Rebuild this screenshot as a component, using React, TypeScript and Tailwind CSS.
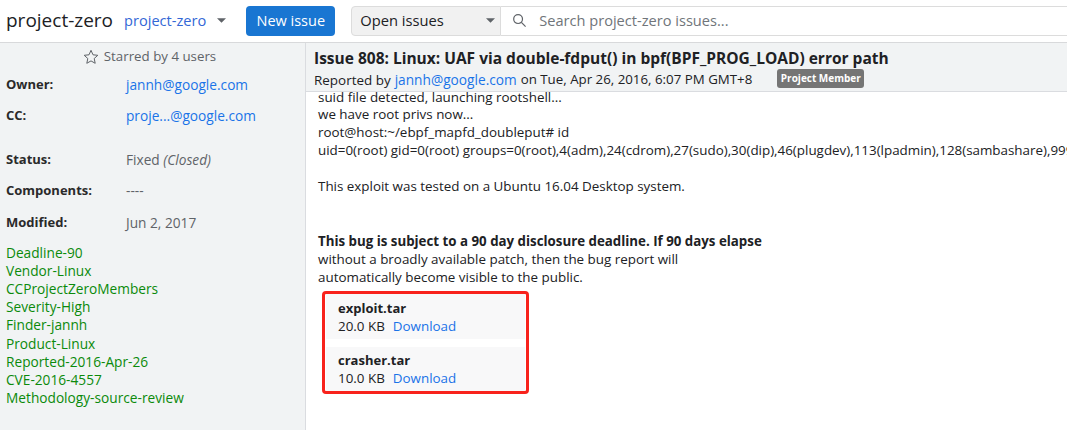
const labels = [
  'Deadline-90',
  'Vendor-Linux',
  'CCProjectZeroMembers',
  'Severity-High',
  'Finder-jannh',
  'Product-Linux',
  'Reported-2016-Apr-26',
  'CVE-2016-4557',
  'Methodology-source-review',
];

const Caret = ({ className }: { className: string }) => (
  <svg width="9" height="5" viewBox="0 0 10 5" className={className}>
    <path d="M0 0h10L5 5z" />
  </svg>
);

const MetaRow = ({ label, children, className }: { label: string; children: React.ReactNode; className: string }) => (
  <div className={`flex h-[18px] items-center ${className}`}>
    <div className="w-[120px] text-[13px] font-bold text-[#2a2a2a]">{label}</div>
    <div>{children}</div>
  </div>
);

const Attachment = ({ name, size, className }: { name: string; size: string; className: string }) => (
  <div className={`bg-[#f8f8f9] pl-[12px] leading-[18px] ${className}`}>
    <div className="text-[13px] font-bold text-[#202124]">{name}</div>
    <div className="text-[13.4px] text-[#202124]">
      {size}
      <a className="ml-[8px] text-[13.4px] text-[#1a73e8]">Download</a>
    </div>
  </div>
);

export default function App() {
  return (
    <div className="h-[430px] w-[1067px] overflow-hidden bg-white font-['Open_Sans','Liberation_Sans',sans-serif] text-[13.7px] text-[#202124]">
      {/* top bar */}
      <header className="flex h-[43px] items-center border-b border-[#d8d9db] pb-[1px]">
        <div className="ml-[6px] text-[19px] leading-none text-[#202124]">project-zero</div>
        <a className="ml-[11px] text-[14.6px] text-[#3367d6]">project-zero</a>
        <Caret className="ml-[11px] fill-[#5f6368]" />
        <button className="ml-[20px] h-[30px] w-[89px] rounded-[4px] bg-[#1976d2] text-[14.5px] font-medium text-white">New issue</button>
        <div className="ml-[16px] flex h-[30px] w-[150px] items-center justify-between rounded-l-[4px] border border-[#dcdcdc] bg-[#f1f1f1] pl-[8px] pr-[5px] text-[14.7px]">
          Open issues
          <Caret className="fill-[#5f6368]" />
        </div>
        <div className="flex h-[30px] flex-1 items-center border-y border-[#dcdcdc] pl-[11px] text-[14.6px] text-[#70757a]">
          <svg width="15" height="15" viewBox="0 0 16 16" fill="none" stroke="#5f6368" strokeWidth="1.3">
            <circle cx="6.5" cy="6.5" r="4.7" />
            <path d="M10 10l4.5 4.5" />
          </svg>
          <span className="ml-[12px]">Search project-zero issues...</span>
        </div>
      </header>

      <div className="flex h-[387px]">
        {/* sidebar */}
        <aside className="w-[306px] shrink-0 border-r border-[#dadce0] bg-[#f1f3f4] pl-[6px]">
          <div className="mt-[5px] flex h-[18px] items-center justify-center pr-[12px] text-[13.3px] text-[#5f6368]">
            <svg width="16" height="16" viewBox="0 0 16 16" fill="none" stroke="#5f6368" strokeWidth="1" className="mr-[5px]">
              <path d="M8 1.3l2 4.5 4.8.5-3.6 3.2 1 4.8L8 11.9l-4.2 2.4 1-4.8L1.2 6.3 6 5.8z" />
            </svg>
            Starred by 4 users
          </div>
          <MetaRow label="Owner:" className="mt-[10px]">
            <a className="text-[#1a73e8]">jannh@google.com</a>
          </MetaRow>
          <MetaRow label="CC:" className="mt-[13px]">
            <a className="text-[#1a73e8]">proje...@google.com</a>
          </MetaRow>
          <MetaRow label="Status:" className="mt-[26px]">
            <span className="text-[#5f6368]">Fixed <i>(Closed)</i></span>
          </MetaRow>
          <MetaRow label="Components:" className="mt-[13px]">
            <span className="text-[#5f6368]">----</span>
          </MetaRow>
          <MetaRow label="Modified:" className="mt-[14px]">
            <span className="text-[#5f6368]">Jun 2, 2017</span>
          </MetaRow>
          <div className="mt-[11.5px] leading-[18.2px] text-[#0b8a0b]">
            {labels.map((l) => (
              <div key={l}>{l}</div>
            ))}
          </div>
        </aside>

        {/* issue */}
        <main className="min-w-0 flex-1 overflow-hidden">
          <div className="h-[49px] border-b border-[#dadce0] bg-[#f1f3f4] pl-[8px] pt-[4px]">
            <div className="whitespace-nowrap text-[15.5px] font-bold leading-[22px] text-[#202124]">
              Issue 808: Linux: UAF via double-fdput() in bpf(BPF_PROG_LOAD) error path
            </div>
            <div className="mt-[2px] flex h-[18px] items-center whitespace-nowrap">
              <span className="text-[13.45px]">Reported by</span>
              <a className="mx-[4px] text-[#1a73e8]">jannh@google.com</a>
              <span className="text-[13.3px]">on Tue, Apr 26, 2016, 6:07 PM GMT+8</span>
              <span className="-mt-[2px] ml-[25px] flex h-[19px] w-[87px] items-center justify-center self-start rounded-[3px] bg-[#757575] text-[10px] font-bold text-white">Project Member</span>
            </div>
          </div>
          <div className="whitespace-nowrap pl-[12px] text-[13.4px] leading-[18px] text-[#202124]">
            <div className="h-[13px] leading-[10px]">suid file detected, launching rootshell...</div>
            <div>we have root privs now...</div>
            <div>root@host:~/ebpf_mapfd_doubleput# id</div>
            <div>uid=0(root) gid=0(root) groups=0(root),4(adm),24(cdrom),27(sudo),30(dip),46(plugdev),113(lpadmin),128(sambashare),999(vboxsf),1000(user)</div>
            <div className="mt-[18px]">This exploit was tested on a Ubuntu 16.04 Desktop system.</div>
            <div className="mt-[37px] text-[13.3px] font-bold">This bug is subject to a 90 day disclosure deadline. If 90 days elapse</div>
            <div>without a broadly available patch, then the bug report will</div>
            <div>automatically become visible to the public.</div>
          </div>
          <div className="ml-[16px] mt-[5px] flex w-[207px] flex-col gap-[8px] rounded-[4px] border-[3px] border-[#f8221c] px-[1px]">
            <Attachment name="exploit.tar" size="20.0 KB" className="h-[45px] pt-[5px]" />
            <Attachment name="crasher.tar" size="10.0 KB" className="h-[44px] pt-[4px]" />
          </div>
        </main>
      </div>
    </div>
  );
}
